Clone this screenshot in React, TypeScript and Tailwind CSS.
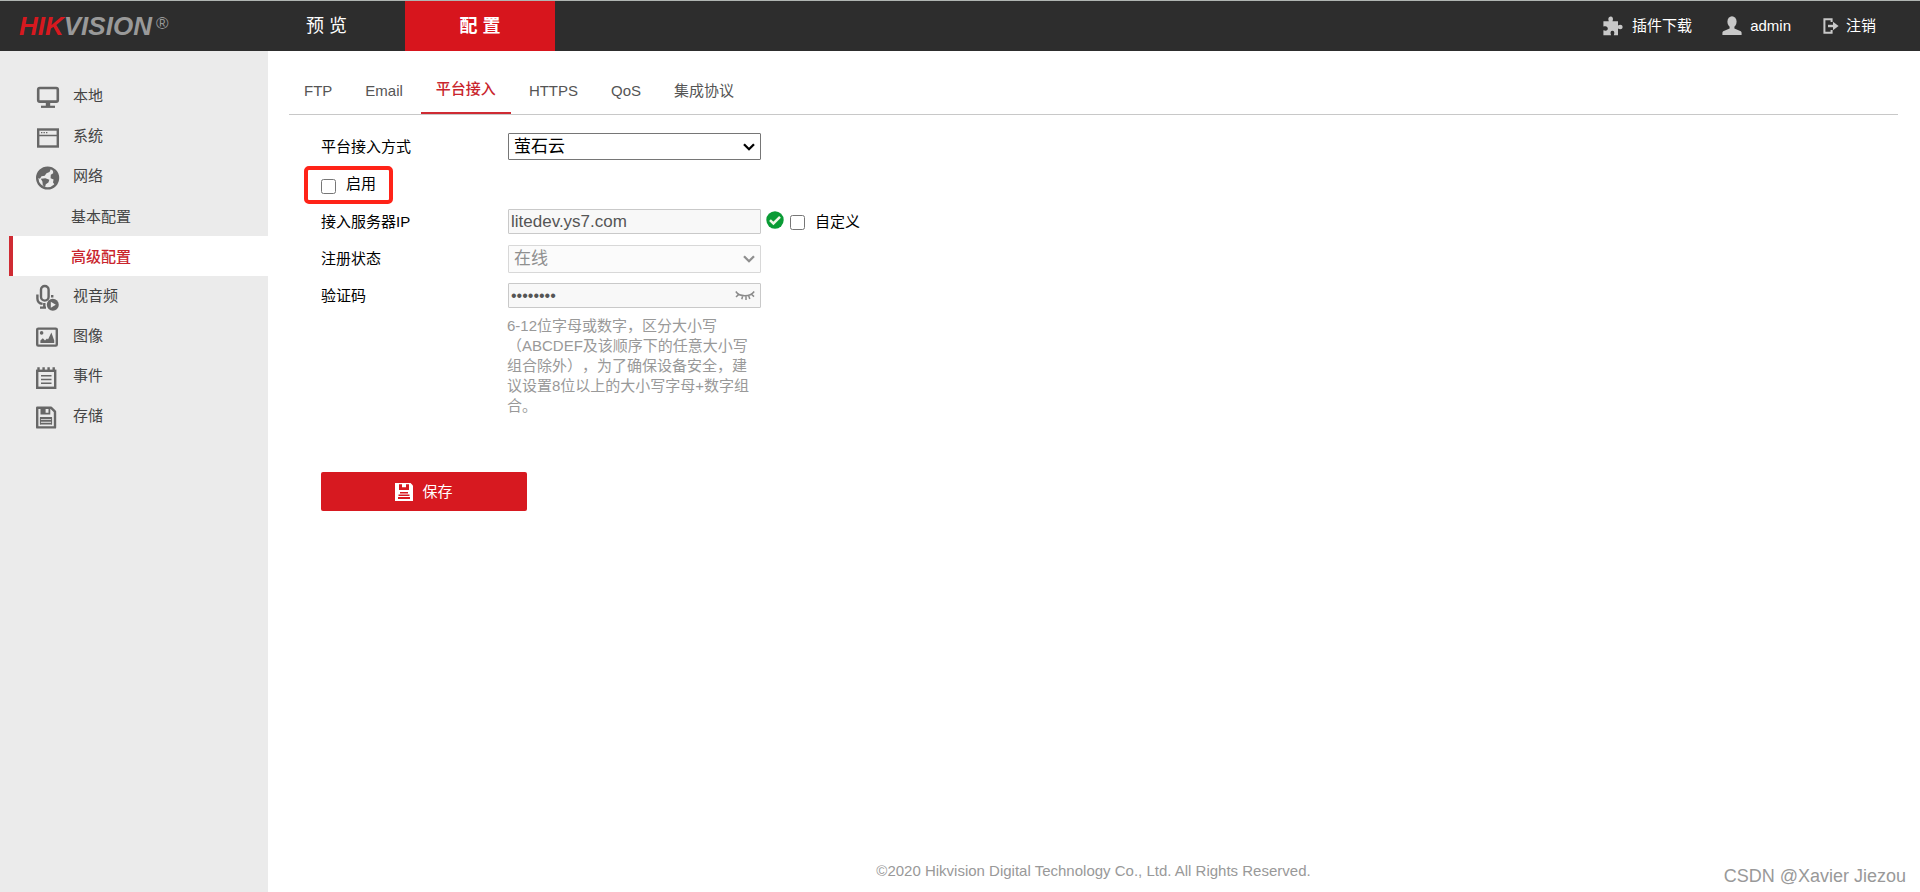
import type { ReactNode } from 'react';

const ink = '#676767';

function MonitorIcon() {
  return (
    <svg width="24" height="24" viewBox="0 0 24 24" fill="none" stroke={ink}>
      <rect x="2.2" y="2" width="19.6" height="13.6" rx="1.6" strokeWidth="2.6" />
      <path d="M12 16v4" strokeWidth="4.4" />
      <path d="M5 20.8h14" strokeWidth="2.2" />
    </svg>
  );
}

function WindowIcon() {
  return (
    <svg width="24" height="24" viewBox="0 0 24 24" fill="none" stroke={ink}>
      <rect x="2.200" y="3.500" width="19.600" height="17" strokeWidth="2.400" />
      <path d="M3 9.500h18" strokeWidth="1.500" />
      <path d="M5 6.600h1.400M7.500 6.600h1.400M10 6.600h1.400" strokeWidth="1.300" />
    </svg>
  );
}

function GlobeIcon() {
  return (
    <svg width="24" height="24" viewBox="0 0 24 24">
      <circle cx="11.600" cy="12" r="10.400" fill="none" stroke={ink} strokeWidth="2.400" />
      <path
        fill={ink}
        d="M12.500 1.500C7 1.500 2 5 1.300 11.500l2.600 1.200 1.600-2.400 3.200-.6 1.800-2.400 3-1.300 1.200-2.400zM4.800 12.800l4.600-.6 4 1.600-1 2.800-2.600 1.600-.8 3.200-2.200-2.400-.4-3.400zM17 4.200l4.200 4.200.6 5.600-2.800 5-2-2.600.6-3-3-1.200.2-3.400 2.400-1.600z"
      />
    </svg>
  );
}

function MicIcon() {
  return (
    <svg width="24" height="28" viewBox="0 0 24 28" fill="none" stroke={ink}>
      <rect x="5" y="2" width="7.600" height="14.600" rx="3.800" strokeWidth="2.400" />
      <path d="M1.400 10.500v4c0 3 2 5 5.200 5.400M16.200 11v2.400" strokeWidth="2.400" />
      <path d="M8.300 19v4M4 23.600h6" strokeWidth="2.400" />
      <circle cx="16.800" cy="20.800" r="6" fill={ink} stroke="none" />
      <path d="M14.800 17.800v6l5-3z" fill="#ebebeb" stroke="none" />
    </svg>
  );
}

function PictureIcon() {
  return (
    <svg width="24" height="24" viewBox="0 0 24 24">
      <rect x="1.200" y="2.600" width="19.600" height="17" rx="1" fill="none" stroke={ink} strokeWidth="2.400" />
      <circle cx="5.600" cy="6.900" r="1.800" fill={ink} />
      <path fill={ink} d="M4.400 17v-2.600l2.400-2.200 2.200 2.400 2-2 1 1L15.400 6.500l2.800 8V17z" />
    </svg>
  );
}

function NotepadIcon() {
  return (
    <svg width="24" height="24" viewBox="0 0 24 24" fill="none" stroke={ink}>
      <rect x="1.200" y="4.800" width="18" height="17" strokeWidth="2.400" />
      <path d="M2.500 1.200v3M7.600 1.200v3M12.600 1.200v3M17.700 1.200v3" strokeWidth="2.400" />
      <path d="M5 9.800h10.500M5 13.500h10.500M5 17.200h10.500" strokeWidth="1.500" />
    </svg>
  );
}

function DiskIcon() {
  return (
    <svg width="24" height="24" viewBox="0 0 24 24" fill="none" stroke={ink}>
      <path d="M1.200 1.800h14L19 5.600v15.800H1.200z" strokeWidth="2.400" strokeLinejoin="round" />
      <path d="M5.400 2.800v4.800h8V2.800" strokeWidth="1.800" />
      <rect x="6" y="2.800" width="3.600" height="4.600" fill={ink} stroke="none" />
      <path d="M4 12h12M4 14.800h12M4 17.600h12" strokeWidth="1.900" />
      <path d="M4.400 11.400v7M15.600 11.400v7" strokeWidth="1" />
    </svg>
  );
}

function PuzzleIcon() {
  return (
    <svg width="20" height="20" viewBox="0 0 20 20" fill="#c8c8c8">
      <path d="M.4 5.2h5.400C4.800 2.600 5.400.4 7.600.4s3 2.200 1.900 4.800H15v4.200c2-1.200 4.600-.8 4.600 1.600s-2.600 2.800-4.600 1.500v6.700h-4.200c1.100-2.700.5-4.400-1.400-4.400s-2.400 1.700-1.300 4.400H.4v-5c2.600 1 4.400.4 4.400-1.600S3 9.600.4 10.600z" />
    </svg>
  );
}

function UserIcon() {
  return (
    <svg width="20" height="20" viewBox="0 0 20 20" fill="#c8c8c8">
      <ellipse cx="10" cy="5.800" rx="4.600" ry="5.600" />
      <path d="M7.600 9.500h4.800v3l6.400 2.700q.8.500.8 1.500V19H.4v-2.300q0-1 .8-1.500l6.400-2.700z" />
    </svg>
  );
}

function ExitIcon() {
  return (
    <svg width="16" height="18" viewBox="0 0 16 18" fill="none" stroke="#c8c8c8">
      <path d="M8.600 5V2.200H1.400v13.600h7.200V13" strokeWidth="2" />
      <path d="M5 9h6" strokeWidth="2.400" />
      <path d="M10 4.800L15.600 9 10 13.200z" fill="#c8c8c8" stroke="none" />
    </svg>
  );
}

function CheckIcon() {
  return (
    <svg width="18" height="18" viewBox="0 0 18 18">
      <circle cx="9" cy="9" r="8.700" fill="#0a9b35" />
      <path d="M4 9.200l3.400 3.300L14 5.800" fill="none" stroke="#f2f7e8" strokeWidth="2.500" />
    </svg>
  );
}

function ClosedEyeIcon() {
  return (
    <svg width="20" height="12" viewBox="0 0 20 12" fill="none" stroke="#8a8a8a" strokeWidth="1.500">
      <path d="M.8 1.500C4.500 7 15 7.200 19.200 1.500M1 7l2.800-2.600M6.800 9.300l.9-3.500M11 10V6M14.800 9l-1.200-3.600M19 6.600l-2.500-2.400" />
    </svg>
  );
}

function SaveIcon() {
  return (
    <svg width="18" height="18" viewBox="0 0 18 18">
      <path d="M0 0h15.500L18 2.500V18H0z" fill="#fff" />
      <path d="M4 1.200h3v3h4v-3h3V7H4zM5 9h8v1.500H5zM3.500 11.500h11V13h-11zM3 14h12v2H3z" fill="#d71920" />
    </svg>
  );
}

function Chevron() {
  return (
    <svg
      width="12"
      height="8"
      viewBox="0 0 12 8"
      fill="none"
      stroke="currentColor"
      strokeWidth="2.300"
      className="pointer-events-none absolute right-1.5 top-1/2 -mt-1"
    >
      <path d="M1 1.200l5 5 5-5" />
    </svg>
  );
}

type Item = { label: string; icon?: ReactNode; active?: boolean };

const menu: Item[] = [
  { label: '本地', icon: <MonitorIcon /> },
  { label: '系统', icon: <WindowIcon /> },
  { label: '网络', icon: <GlobeIcon /> },
  { label: '基本配置' },
  { label: '高级配置', active: true },
  { label: '视音频', icon: <MicIcon /> },
  { label: '图像', icon: <PictureIcon /> },
  { label: '事件', icon: <NotepadIcon /> },
  { label: '存储', icon: <DiskIcon /> },
];

const tabs = ['FTP', 'Email', '平台接入', 'HTTPS', 'QoS', '集成协议'];

function SideItem({ label, icon, active }: Item) {
  if (!icon) {
    return (
      <li>
        <a
          href="#"
          className={
            active
              ? 'ml-[9px] flex h-10 items-center border-l-4 border-[#cf2b33] bg-white pl-[58px] pt-0.5 font-medium text-[#c9252d]'
              : 'flex h-10 items-center pl-[71px] pt-0.5 text-[#444]'
          }
        >
          {label}
        </a>
      </li>
    );
  }
  return (
    <li>
      <a href="#" className="flex h-10 items-center pl-9 text-[#444]">
        <span className="mt-1 flex w-[37px] items-center">{icon}</span>
        {label}
      </a>
    </li>
  );
}

function Row({ label, id, children }: { label: string; id: string; children: ReactNode }) {
  return (
    <div className="flex h-[37px] items-center">
      <label htmlFor={id} className="w-[187px] shrink-0">
        {label}
      </label>
      {children}
    </div>
  );
}

export default function App() {
  return (
    <div className="relative flex min-h-screen flex-col bg-white font-['Liberation_Sans','Noto_Sans_CJK_SC',sans-serif] text-[15px] leading-5 text-black">
      <header className="flex h-[51px] items-stretch border-t border-[#b0b5b2] bg-[#2d2d2d] text-white">
        <a href="#" className="flex w-[252px] items-center pl-[19px] text-[26px] font-bold italic leading-none">
          <span className="text-[#d7191f]">HIK</span>
          <span className="text-[#999]">VISION</span>
          <span className="ml-1 self-start pt-3.5 text-[17px] font-normal not-italic leading-none text-[#999]">®</span>
        </a>
        <nav className="flex text-[18px]">
          <a href="#" className="flex w-[153px] items-center pl-[54px]">
            预 览
          </a>
          <a href="#" className="flex w-[150px] items-center justify-center bg-[#d7151d] font-bold">
            配 置
          </a>
        </nav>
        <div className="ml-auto flex items-center pr-11">
          <a href="#" className="flex items-center gap-[9px]">
            <PuzzleIcon />
            插件下载
          </a>
          <a href="#" className="ml-[30px] flex items-center gap-2">
            <UserIcon />
            admin
          </a>
          <a href="#" className="ml-8 flex items-center gap-[7px]">
            <ExitIcon />
            注销
          </a>
        </div>
      </header>

      <div className="flex grow">
        <aside className="w-[268px] shrink-0 bg-[#ebebeb] pt-[25px]">
          <ul>
            {menu.map((m) => (
              <SideItem key={m.label} {...m} />
            ))}
          </ul>
        </aside>

        <main className="flex grow flex-col pl-[21px] pr-[22px]">
          <nav className="flex h-16 items-end gap-[3px] border-b border-[#c8c8c8] text-[#555]">
            {tabs.map((t) =>
              t === '平台接入' ? (
                <a
                  key={t}
                  href="#"
                  className="border-b-2 border-[#cf2b33] px-[15px] pb-[13px] font-medium text-[#c9252d]"
                >
                  {t}
                </a>
              ) : (
                <a key={t} href="#" className="px-[15px] pb-[13px]">
                  {t}
                </a>
              ),
            )}
          </nav>

          <form className="pl-8 pt-[13px]">
            <Row label="平台接入方式" id="mode">
              <div className="relative w-[253px]">
                <select
                  id="mode"
                  className="block h-[27px] w-full appearance-none rounded-[1px] border border-[#767676] bg-white pl-[5px] text-[17px]"
                >
                  <option>萤石云</option>
                </select>
                <Chevron />
              </div>
            </Row>

            <div className="flex h-[38px] items-center">
              <div className="relative flex items-center gap-[10px]">
                <input id="enable" type="checkbox" className="mt-1 size-[15px]" />
                <label htmlFor="enable">启用</label>
                <span className="pointer-events-none absolute -inset-x-[17px] -bottom-[10px] -top-2 rounded-[5px] border-4 border-[#ff2318]" />
              </div>
            </div>

            <Row label="接入服务器IP" id="server">
              <input
                id="server"
                type="text"
                defaultValue="litedev.ys7.com"
                className="h-[25px] w-[253px] rounded-[1px] border border-[#c9c9c9] bg-[#f8f8f8] px-0.5 text-[17px] text-[#555]"
              />
              <span className="mb-1 ml-[5px]">
                <CheckIcon />
              </span>
              <input id="custom" type="checkbox" className="ml-1.5 mr-[10px] mt-0.5 size-[15px]" />
              <label htmlFor="custom">自定义</label>
            </Row>

            <Row label="注册状态" id="status">
              <div className="relative w-[253px] text-[#8f8f8f]">
                <select
                  id="status"
                  disabled
                  className="block h-7 w-full appearance-none rounded-[1px] border border-[#d8d8d8] bg-[#fbfbfb] pl-[5px] text-[17px]"
                >
                  <option>在线</option>
                </select>
                <Chevron />
              </div>
            </Row>

            <Row label="验证码" id="code">
              <div className="flex h-[25px] w-[253px] items-center rounded-[1px] border border-[#c9c9c9] bg-[#f8f8f8] pr-[5px]">
                <input
                  id="code"
                  type="password"
                  defaultValue="abcd1234"
                  className="w-full min-w-0 bg-transparent px-0.5 text-[16px] text-[#555]"
                />
                <button type="button" aria-label="显示">
                  <ClosedEyeIcon />
                </button>
              </div>
            </Row>

            <p className="ml-[186px] w-[250px] pt-0.5 text-[#999] [text-spacing-trim:space-all]">
              6-12位字母或数字，区分大小写（ABCDEF及该顺序下的任意大小写组合除外），为了确保设备安全，建议设置8位以上的大小写字母+数字组合。
            </p>

            <button
              type="button"
              className="mt-14 flex h-[39px] w-[206px] items-center justify-center gap-[9px] rounded-[2px] bg-[#d71920] text-white"
            >
              <SaveIcon />
              保存
            </button>
          </form>

          <footer className="mt-auto pb-[11px] text-center text-[#999]">
            ©2020 Hikvision Digital Technology Co., Ltd. All Rights Reserved.
          </footer>
        </main>
      </div>

      <span className="absolute bottom-1.5 right-[14px] text-[18px] text-[#999]">CSDN @Xavier Jiezou</span>
    </div>
  );
}
